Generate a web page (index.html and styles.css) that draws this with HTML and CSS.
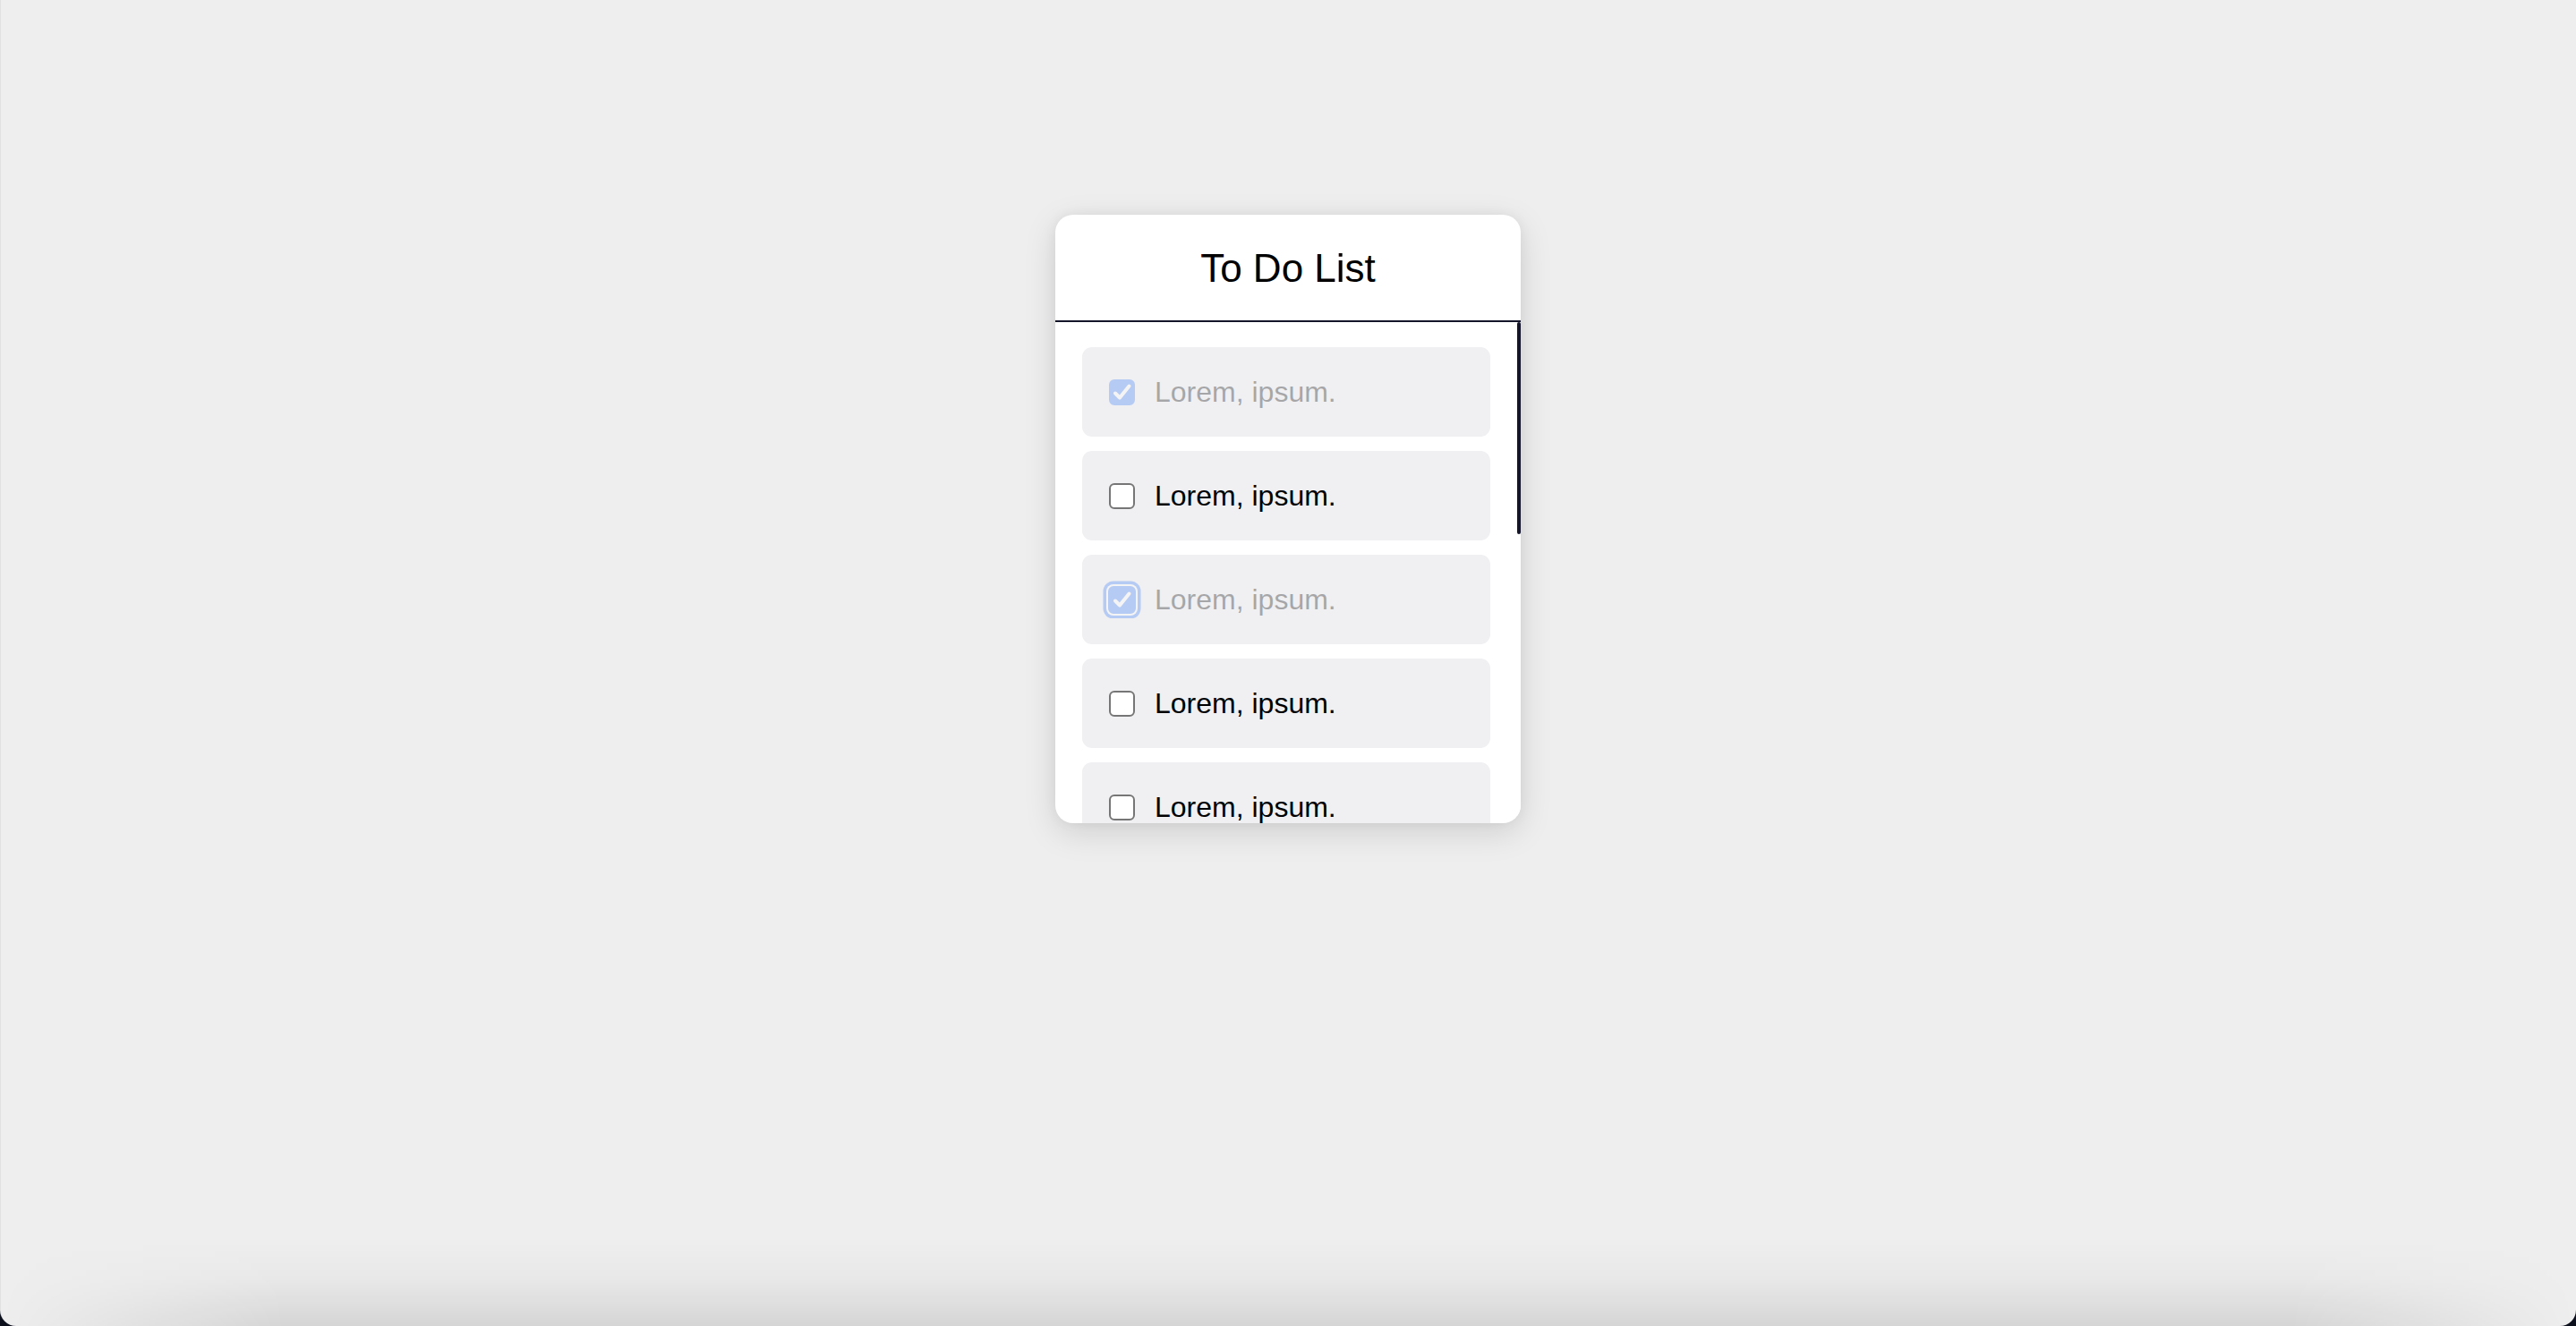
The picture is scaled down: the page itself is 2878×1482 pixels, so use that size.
FILE: index.html
```html
<!DOCTYPE html>
<html lang="en">
<head>
<meta charset="utf-8">
<title>To Do List</title>
<link rel="stylesheet" href="styles.css">
</head>
<body>
<main class="stage">
  <section class="card">
    <header class="card-head">
      <h1 class="title">To Do List</h1>
    </header>
    <div class="body">
      <ul class="list">
        <li class="item done">
          <span class="box checked"><svg viewBox="0 0 29 29" class="tick"><path d="M7 15.5 L12 20.5 L22.5 7.5"/></svg></span>
          <span class="label">Lorem, ipsum.</span>
        </li>
        <li class="item">
          <span class="box"></span>
          <span class="label">Lorem, ipsum.</span>
        </li>
        <li class="item done">
          <span class="box checked focused"><svg viewBox="0 0 29 29" class="tick"><path d="M7 15.5 L12 20.5 L22.5 7.5"/></svg></span>
          <span class="label">Lorem, ipsum.</span>
        </li>
        <li class="item">
          <span class="box"></span>
          <span class="label">Lorem, ipsum.</span>
        </li>
        <li class="item">
          <span class="box"></span>
          <span class="label">Lorem, ipsum.</span>
        </li>
      </ul>
      <div class="track"><div class="thumb"></div></div>
    </div>
  </section>
</main>
<div class="window-shade"></div>
<div class="window-frame"></div>
</body>
</html>
```

FILE: styles.css
```css
html, body {
  margin: 0;
  padding: 0;
  height: 100%;
}

body {
  background: #eeeeee;
  font-family: "Liberation Sans", Arial, Helvetica, sans-serif;
  color: #000;
  overflow: hidden;
}

.stage {
  display: flex;
  justify-content: center;
  align-items: flex-start;
  padding-top: 240px;
}

.card {
  width: 520px;
  height: 680px;
  background: #ffffff;
  border-radius: 20px;
  box-shadow: 0 10px 36px rgba(0, 0, 0, 0.13), 0 0 14px rgba(0, 0, 0, 0.05);
  display: flex;
  flex-direction: column;
  overflow: hidden;
}

.card-head {
  height: 118px;
  flex: 0 0 auto;
  display: flex;
  align-items: center;
  justify-content: center;
  border-bottom: 2px solid #14142b;
}

.title {
  margin: 0;
  font-size: 44px;
  font-weight: 400;
  line-height: 1;
  padding-top: 2px;
}

.body {
  flex: 1 1 auto;
  min-height: 0;
  display: flex;
  overflow: hidden;
}

.list {
  flex: 1 1 auto;
  min-width: 0;
  list-style: none;
  margin: 0;
  padding: 28px 30px 0 30px;
  display: flex;
  flex-direction: column;
  gap: 16px;
  overflow: hidden;
}

.track {
  flex: 0 0 4px;
  width: 4px;
  background: #ffffff;
}

.thumb {
  height: 237px;
  background: #14142b;
  border-radius: 2px;
}

.item {
  flex: 0 0 100px;
  height: 100px;
  box-sizing: border-box;
  background: #f0f0f2;
  border-radius: 11px;
  display: flex;
  align-items: center;
  gap: 22px;
  padding-left: 30px;
}

.item.done > * {
  opacity: 0.3;
}

.box {
  width: 29px;
  height: 29px;
  box-sizing: border-box;
  border: 2px solid #767676;
  border-radius: 6px;
  background: #ffffff;
  flex: 0 0 auto;
  display: flex;
  align-items: center;
  justify-content: center;
}

.box.checked {
  background: #3478f6;
  border-color: #3478f6;
}

.box.focused {
  width: 31px;
  height: 31px;
  margin-left: -1px;
  margin-right: -1px;
  box-shadow: 0 0 0 2px #ffffff, 0 0 0 5.5px #3478f6;
}

.tick {
  width: 29px;
  height: 29px;
  flex: 0 0 auto;
}

.tick path {
  fill: none;
  stroke: #ffffff;
  stroke-width: 4;
  stroke-linecap: round;
  stroke-linejoin: round;
}

.label {
  font-size: 32px;
  line-height: 1.15;
  white-space: nowrap;
}

.window-shade {
  position: fixed;
  left: 0;
  right: 0;
  bottom: 0;
  height: 95px;
  pointer-events: none;
  background: linear-gradient(to bottom, rgba(0, 0, 0, 0) 0%, rgba(0, 0, 0, 0.025) 45%, rgba(0, 0, 0, 0.1) 100%);
  -webkit-mask-image: linear-gradient(to right, transparent 0, #000 320px, #000 calc(100% - 320px), transparent 100%);
  mask-image: linear-gradient(to right, transparent 0, #000 320px, #000 calc(100% - 320px), transparent 100%);
}

.window-frame {
  position: fixed;
  inset: 0;
  pointer-events: none;
  border-radius: 0 0 18px 18px;
  box-shadow: 0 0 0 40px #0c0f1c;
  border-left: 1px solid rgba(0, 0, 0, 0.05);
}
```
